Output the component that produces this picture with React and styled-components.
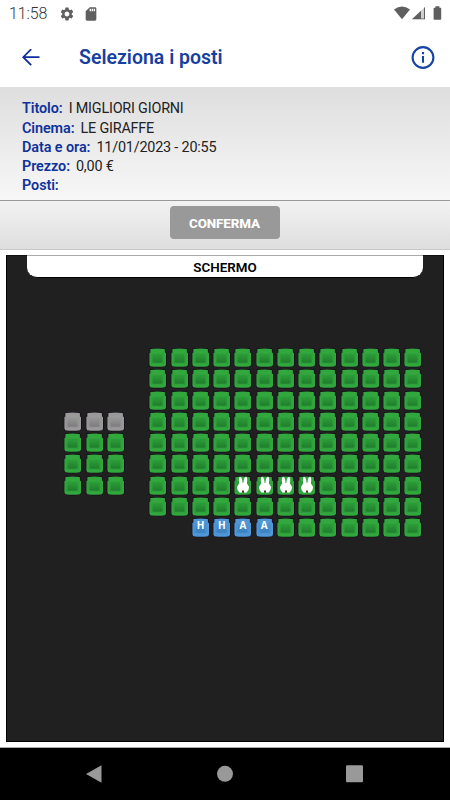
import React, { useState } from 'react';
import styled, { createGlobalStyle } from 'styled-components';
import { MdSettings, MdSdCard } from 'react-icons/md';

const GlobalStyle = createGlobalStyle`
  * { box-sizing: border-box; }
  body {
    margin: 0;
    background: #fff;
    font-family: Roboto, 'Liberation Sans', sans-serif;
  }
`;

const details = [
  { label: 'Titolo:', value: 'I MIGLIORI GIORNI' },
  { label: 'Cinema:', value: 'LE GIRAFFE' },
  { label: 'Data e ora:', value: '11/01/2023 - 20:55' },
  { label: 'Prezzo:', value: '0,00 €' },
  { label: 'Posti:', value: '' },
];

// g = free, x = not available, r = taken, H / A = reserved seats, . = aisle
const seatMap = [
  '....ggggggggggggg',
  '....ggggggggggggg',
  '....ggggggggggggg',
  'xxx.ggggggggggggg',
  'ggg.ggggggggggggg',
  'ggg.ggggggggggggg',
  'ggg.ggggrrrrggggg',
  '....ggggggggggggg',
  '......HHAAggggggg',
];

const palette = {
  green: { base: '#31a73d', edge: '#2c9d39', from: '#2d9f39', to: '#1f7d2c' },
  grey: { base: '#9a9a9a', edge: '#909090', from: '#989898', to: '#7c7c7c' },
  blue: { base: '#4f97d6', edge: '#468dcc', from: '#4a92d1', to: '#3a80c0' },
};

const seatColor = (type) => {
  if (type === 'x') return 'grey';
  if (type === 'H' || type === 'A') return 'blue';
  return 'green';
};

const Seat = ({ type, onClick }) => {
  if (type === '.') return <Cell />;
  const name = seatColor(type);
  const color = palette[name];
  return (
    <Cell onClick={onClick}>
      <svg width="21.25" height="21.25" viewBox="0 0 21.25 21.25">
        <path
          d="M3.4 1.9q7.2-.8 14.4 0l.2 3.8h1v11.8l-.8 1.7q-7.5 1-15 0l-.8-1.7V5.7h.9z"
          fill={color.base}
          stroke="#150b1b"
          strokeWidth="1.2"
          strokeLinejoin="round"
          paintOrder="stroke"
        />
        <path d="M4.4 5.8v10.4h12.4V5.8" fill="none" stroke={color.edge} strokeWidth="0.6" />
        <path d="M5.4 6.6q5 .5 10.2 0v8.8q-5.1.6-10.2 0z" fill={`url(#cushion-${name})`} />
      </svg>
      {type === 'r' && <Rabbit />}
      {name === 'blue' && <Letter>{type}</Letter>}
    </Cell>
  );
};

const Rabbit = () => (
  <RabbitIcon viewBox="0 0 21.25 21.25">
    <path
      d="M8 1.8C9.5 1.5 10.4 4.6 10.6 8h.8c.2-3.4 1.2-6.5 2.7-6.2 1.3.4 1.3 3.7.8 6.4l2.2 3.8-.6 3-1.9 2.4-2.2.3-.7-1.6h-1.4l-.7 1.6-2.2-.3L5.5 15l-.6-3 2.3-3.8c-.5-2.7-.5-6 .8-6.4z"
      fill="#fff"
    />
    <path d="M9.9 15.4h2.2l-.4 2.2h-1.4z" fill="#4a3218" />
  </RabbitIcon>
);

const CushionGradients = () => (
  <Defs width="0" height="0">
    <defs>
      {Object.entries(palette).map(([name, color]) => (
        <linearGradient key={name} id={`cushion-${name}`} x1="0" y1="0" x2="0" y2="1">
          <stop offset="0" stopColor={color.from} />
          <stop offset="1" stopColor={color.to} />
        </linearGradient>
      ))}
    </defs>
  </Defs>
);

const App = () => {
  const [selected, setSelected] = useState(null);

  return (
    <Screen>
      <GlobalStyle />
      <CushionGradients />

      <StatusBar>
        <Clock>11:58</Clock>
        <MdSettings size={16} />
        <CardSlot><MdSdCard size={16} /></CardSlot>
        <StatusRight width="50" height="16" viewBox="0 0 50 16">
          <path d="M0 3.5q8-6 16 0L8 13.2z" />
          <path d="M18 13.2 31 1v12.2z" opacity=".3" />
          <path d="M18 13.2 27 4.8v8.4z" />
          <path d="M27 12.4h3V2l1-1v12.2h-4z" />
          <path d="M41.4.2h4v1.5h1q.8 0 .8.8v10.4q0 .8-.8.8h-6q-.8 0-.8-.8V2.5q0-.8.8-.8h1z" />
        </StatusRight>
      </StatusBar>

      <AppBar>
        <svg width="18" height="18" viewBox="0 0 18 18" fill="none" stroke="#0e2f9b" strokeWidth="1.8">
          <path d="M17.5 8.2H1.2M9.2.2 1.2 8.2l8 8" />
        </svg>
        <Title>Seleziona i posti</Title>
        <svg width="24" height="24" viewBox="0 0 24 24" fill="none" stroke="#1544a3" strokeWidth="2.1">
          <circle cx="12" cy="11.5" r="10.4" />
          <path d="M12 10v6.8M12 6v2.2" />
        </svg>
      </AppBar>

      <Info>
        {details.map((item) => (
          <InfoRow key={item.label}>
            <Label>{item.label}</Label>
            <Value>{item.value}</Value>
          </InfoRow>
        ))}
      </Info>

      <Actions>
        <ConfirmButton disabled={!selected}>CONFERMA</ConfirmButton>
      </Actions>

      <RoomArea>
        <Room>
          <ScreenLabel>SCHERMO</ScreenLabel>
          <Seats>
            {seatMap.map((row, r) =>
              row.split('').map((type, c) => (
                <Seat
                  key={`${r}-${c}`}
                  type={type}
                  onClick={() => type === 'g' && setSelected(`${r}-${c}`)}
                />
              ))
            )}
          </Seats>
        </Room>
      </RoomArea>

      <NavBar viewBox="0 0 450 52">
        <path d="M86 26 101.5 17.2v17.6z" />
        <circle cx="225" cy="25.8" r="8" />
        <rect x="346" y="17.2" width="17" height="17" rx="1" />
      </NavBar>
    </Screen>
  );
};

// --- styles ---
const Screen = styled.div`
  width: 450px;
  height: 800px;
  display: flex;
  flex-direction: column;
  background: #fff;
  overflow: hidden;
`;

const Defs = styled.svg` position: absolute; `;

const StatusBar = styled.div`
  height: 28px;
  padding: 0 6px 1px 9px;
  display: flex;
  align-items: center;
  color: #5f5f5f;
  flex-shrink: 0;
`;

const Clock = styled.span`
  width: 50px;
  font-size: 16px;
  letter-spacing: -0.1px;
  font-weight: 300;
  color: #333;
`;

const CardSlot = styled.span`
  display: flex;
  margin-left: 8px;
`;

const StatusRight = styled.svg`
  margin-left: auto;
  fill: #5f5f5f;
`;

const AppBar = styled.div`
  height: 59px;
  padding: 0 15px 0 22px;
  display: flex;
  align-items: center;
  flex-shrink: 0;
`;

const Title = styled.h1`
  margin: 0 auto 0 39px;
  padding-top: 1px;
  font-size: 19.5px;
  line-height: 24px;
  font-weight: 600;
  color: #16409f;
`;

const Info = styled.div`
  height: 114px;
  padding: 12.3px 22px 0;
  background: linear-gradient(#dedede, #f7f7f7);
  border-bottom: 1px solid #999;
  flex-shrink: 0;
`;

const InfoRow = styled.div`
  display: flex;
  gap: 6px;
  font-size: 14.4px;
  line-height: 19.2px;
`;

const Label = styled.span`
  font-weight: 600;
  letter-spacing: -0.08px;
  color: #0f329b;
`;

const Value = styled.span`
  letter-spacing: -0.2px;
  color: #222;
`;

const Actions = styled.div`
  height: 49px;
  padding-top: 5px;
  display: flex;
  justify-content: center;
  align-items: flex-start;
  background: linear-gradient(#f2f2f2, #dedede);
  border-bottom: 1px solid #c8c8c8;
  flex-shrink: 0;
`;

const ConfirmButton = styled.button`
  width: 110px;
  height: 33px;
  padding: 1px 1px 0 0;
  border: none;
  border-radius: 4px;
  background: #999;
  color: #fff;
  font-family: inherit;
  font-size: 13.4px;
  font-weight: 800;
  letter-spacing: -0.1px;
`;

const RoomArea = styled.div`
  height: 498px;
  padding: 5px 6px 5px;
  border-bottom: 1px solid #aaa;
`;

const Room = styled.div`
  height: 487px;
  background: #202020;
  border: 1px solid #000;
  border-top-color: #111;
  display: flex;
  flex-direction: column;
  align-items: center;
`;

const ScreenLabel = styled.div`
  width: 396px;
  height: 23px;
  margin-top: -1px;
  background: #fff;
  border-top: 1px solid #aaa;
  border-bottom: 1px solid #000;
  border-radius: 0 0 10px 10px;
  text-align: center;
  font-size: 13.4px;
  line-height: 23px;
  font-weight: 600;
  color: #000;
`;

const Seats = styled.div`
  margin: 69px 0 0 36px;
  display: grid;
  grid-template-columns: repeat(17, 21.25px);
  grid-auto-rows: 21.25px;
`;

const Cell = styled.div`
  position: relative;

  svg { display: block; }
`;

const RabbitIcon = styled.svg`
  position: absolute;
  inset: 0;
  width: 100%;
  height: 100%;
`;

const Letter = styled.span`
  position: absolute;
  inset: 0;
  text-align: center;
  font-family: 'Open Sans', sans-serif;
  font-size: 10px;
  line-height: 17.4px;
  font-weight: 700;
  color: #fff;
`;

const NavBar = styled.svg`
  width: 450px;
  height: 52px;
  background: #000;
  fill: #999;
  flex-shrink: 0;
`;

export default App;
